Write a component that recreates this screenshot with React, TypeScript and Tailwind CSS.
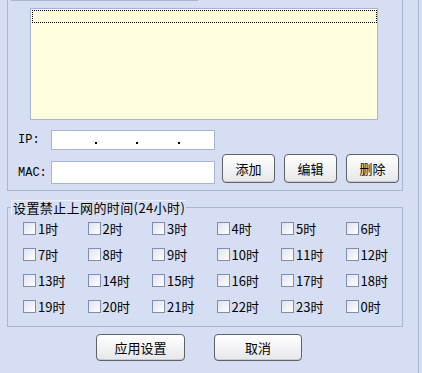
const LINE = 'border-[#a8b3d6]'

const hours = [1, 2, 3, 4, 5, 6, 7, 8, 9, 10, 11, 12, 13, 14, 15, 16, 17, 18, 19, 20, 21, 22, 23, 0]

function Btn({ label, className }: { label: string; className: string }) {
  return (
    <button
      className={`${className} flex items-center justify-center rounded-[4px] border border-[#5e6269] bg-gradient-to-b from-white to-[#e6e7ea] text-[13px] text-black shadow-[inset_0_-1px_0_#c9cbd0]`}
    >
      {label}
    </button>
  )
}

function Check({ label }: { label: string }) {
  return (
    <label className="flex h-[13px] items-center gap-[2px]">
      <span className="h-[13px] w-[13px] shrink-0 border border-[#7f8db5] bg-gradient-to-br from-[#dfe3ee] to-white" />
      <span className="text-[13px] leading-none text-black">{label}</span>
    </label>
  )
}

export default function App() {
  return (
    <div
      className="h-[373px] w-[422px] overflow-hidden bg-[#d6def3]"
      style={{ fontFamily: '"Noto Sans CJK SC", "Liberation Sans", sans-serif' }}
    >
      <div className={`h-full w-[419px] border-r ${LINE} pl-[7px]`}>
        {/* list / ip / mac box */}
        <div className={`w-[396px] border-r border-b border-l ${LINE} pb-[6px]`}>
          <div className="ml-[3px] h-px w-[187px] bg-[#a8b3d6]" />
          <div className={`ml-[22px] mt-[7px] h-[112px] w-[348px] border ${LINE} bg-[#ffffdd] p-px`}>
            <div className="h-[13px] w-[345px] border border-dotted border-black" />
          </div>

          <div className="mt-[10px] flex items-end">
            <div className="ml-[10px] flex flex-col">
              <div className="flex items-center">
                <span className="w-[33px] text-[12px] text-black" style={{ fontFamily: '"Liberation Mono", monospace' }}>
                  IP:
                </span>
                <div className={`flex h-[20px] w-[164px] items-end border ${LINE} bg-white pb-[5px]`}>
                  <span className="w-[43px]" />
                  <span className="h-[2px] w-[2px] bg-black" />
                  <span className="w-[39px]" />
                  <span className="h-[2px] w-[2px] bg-black" />
                  <span className="w-[40px]" />
                  <span className="h-[2px] w-[2px] bg-black" />
                </div>
              </div>
              <div className="mt-[11px] flex items-center">
                <span className="w-[33px] text-[12px] text-black" style={{ fontFamily: '"Liberation Mono", monospace' }}>
                  MAC:
                </span>
                <div className={`h-[23px] w-[164px] border ${LINE} bg-white`} />
              </div>
            </div>
            <div className="mb-px ml-[7px] flex gap-[9px]">
              <Btn label="添加" className="h-[29px] w-[53px]" />
              <Btn label="编辑" className="h-[29px] w-[53px]" />
              <Btn label="删除" className="h-[29px] w-[53px]" />
            </div>
          </div>
        </div>

        {/* forbidden hours */}
        <div className={`relative mt-[16px] w-[396px] border ${LINE} pb-[13px] pl-[15px] pt-[14px]`}>
          <span className="absolute left-[3px] top-[-8px] h-[15px] border-t border-l border-[#eef1fa] bg-[#d6def3] px-px text-[13px] leading-[14px] tracking-[0.4px] text-black">
            设置禁止上网的时间(24小时)
          </span>
          <div className="grid w-[387px] grid-cols-6 gap-y-[13px]">
            {hours.map((h) => (
              <Check key={h} label={`${h}时`} />
            ))}
          </div>
        </div>

        <div className="mt-[7px] flex">
          <Btn label="应用设置" className="ml-[89px] h-[27px] w-[89px]" />
          <Btn label="取消" className="ml-[29px] h-[27px] w-[88px]" />
        </div>
      </div>
    </div>
  )
}
